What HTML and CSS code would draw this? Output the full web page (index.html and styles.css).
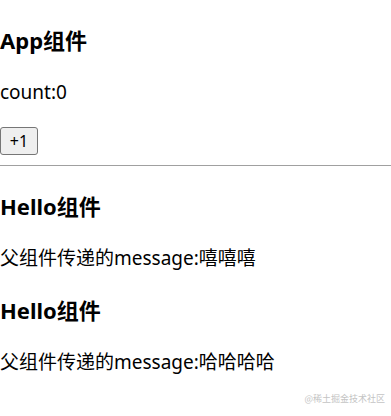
FILE: index.html
```html
<!DOCTYPE html>
<html lang="zh-CN">
<head>
    <meta charset="UTF-8">
    <meta name="viewport" content="width=device-width, initial-scale=1.0">
    <title>App</title>
    <link rel="stylesheet" href="styles.css">
</head>
<body>
    <div id="app">
        <h3>App组件</h3>
        <p>count:0</p>
        <div class="btn-row">
            <button type="button">+1</button>
        </div>
        <hr>
        <div class="hello">
            <h3>Hello组件</h3>
            <p>父组件传递的message:嘻嘻嘻</p>
        </div>
        <div class="hello">
            <h3>Hello组件</h3>
            <p>父组件传递的message:哈哈哈哈</p>
        </div>
    </div>
    <div class="watermark">@稀土掘金技术社区</div>
</body>
</html>
```

FILE: styles.css
```css
body {
    margin: 0;
    background-color: #ffffff;
    color: #000000;
    font-family: "Noto Sans", "Noto Sans CJK SC", sans-serif;
    font-size: 19px;
    line-height: 24px;
}
h3 {
    font-size: 22px;
    line-height: 36px;
    margin: 22px 0;
}
p {
    margin: 18px 0;
}
.btn-row {
    margin-top: 23px;
    height: 28px;
}
.btn-row button {
    height: 28px;
    width: 38px;
    padding: 0;
    font-family: "Noto Sans", sans-serif;
    font-size: 16px;
    color: #000;
    background-color: #efefef;
    border: 1px solid #767676;
    border-radius: 3px;
}
hr {
    margin: 10px 0 0;
    border: none;
    border-top: 1px solid #a0a0a0;
}
.watermark {
    position: absolute;
    right: 6px;
    bottom: 11px;
    font-family: "Noto Sans CJK SC", sans-serif;
    font-size: 9px;
    line-height: 12px;
    color: #c4c4c4;
}
```
